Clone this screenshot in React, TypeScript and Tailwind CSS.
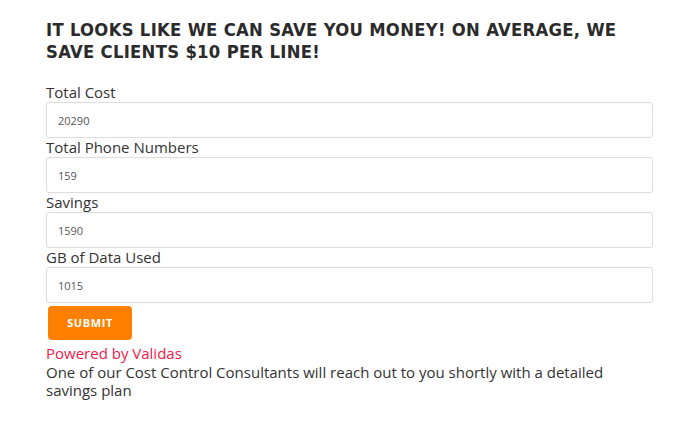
import React from 'react';

const fields = [
  { label: 'Total Cost', value: '20290' },
  { label: 'Total Phone Numbers', value: '159' },
  { label: 'Savings', value: '1590' },
  { label: 'GB of Data Used', value: '1015' },
];

export default function App() {
  return (
    <div className="min-h-screen bg-white pl-[46px] pr-[24px] pt-[19px] font-['Open_Sans',sans-serif] text-[#333]">
      <h2 className="font-['DejaVu_Sans_Condensed','DejaVu_Sans',sans-serif] text-[18.3px] font-bold uppercase leading-[22px] tracking-[0.3px] text-[#2b2b2b] [font-stretch:condensed]">
        It looks like we can save you money! On average, we save clients $10 per line!
      </h2>

      <form className="mt-[20px] flex flex-col">
        {fields.map((f) => (
          <div key={f.label} className="flex flex-col">
            <label className="h-[19px] text-[15px] leading-[19px] text-[#333]">{f.label}</label>
            <input
              readOnly
              value={f.value}
              className="h-[36px] w-[607px] rounded-[3px] border border-[#dcdcdc] bg-white px-[11px] text-[11px] text-[#555] outline-none"
            />
          </div>
        ))}
        <button
          type="button"
          className="ml-[2px] mt-[3px] h-[34px] w-[84px] rounded-[4px] bg-[#ff7f00] text-[11px] font-bold tracking-[0.6px] text-white"
        >
          SUBMIT
        </button>
      </form>

      <p className="mt-[4px] text-[15px] leading-[19px] text-[#f0194a]">Powered by Validas</p>
      <p className="w-[580px] text-[15px] leading-[18px] text-[#333]">
        One of our Cost Control Consultants will reach out to you shortly with a detailed savings plan
      </p>
    </div>
  );
}
